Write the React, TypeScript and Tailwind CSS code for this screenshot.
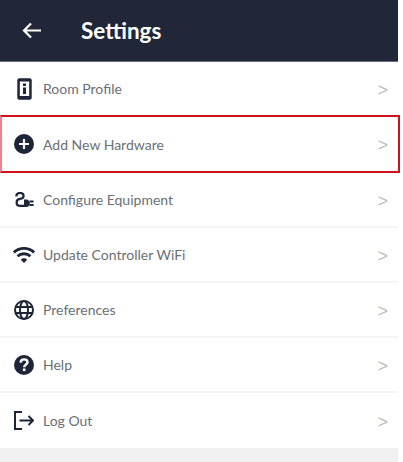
import React from "react";

const ink = "#1f2539";

const RoomIcon = () => (
  <svg className="shrink-0" width="15" height="22" viewBox="0 0 15 22">
    <rect x="0.3" y="0.3" width="14.4" height="21.4" rx="2" fill={ink} />
    <rect x="2.8" y="3.5" width="9.4" height="14.5" fill="#fff" />
    <rect x="6" y="5.5" width="3" height="2.5" fill={ink} />
    <rect x="6" y="9.5" width="3" height="6.5" fill={ink} />
  </svg>
);
const PlusIcon = () => (
  <svg className="shrink-0" width="20" height="20" viewBox="0 0 20 20">
    <circle cx="10" cy="10" r="10" fill={ink} />
    <path d="M10 5v10M5 10h10" stroke="#fff" strokeWidth="2.2" />
  </svg>
);
const PlugIcon = () => (
  <svg className="shrink-0" width="19" height="16" viewBox="0 0 19 16" fill="none">
    <path d="M1.2 4.4C1.5 2 3 1 5 1C7.2 1 8.6 2.2 8.6 3.9C8.6 5.6 7.2 6.5 5 6.9C2.8 7.3 1.6 8.3 1.6 10.4C1.6 12.6 3 13.9 5.5 13.9H9" stroke={ink} strokeWidth="2.2" />
    <path d="M9 7.5H11.5C13.5 7.5 14.8 9.3 14.8 11.2C14.8 13.1 13.5 15 11.5 15H9Z" fill={ink} />
    <path d="M14.5 9.5H18.6M14.5 13H18.6" stroke={ink} strokeWidth="2" />
  </svg>
);
const WifiIcon = () => (
  <svg className="shrink-0" width="22" height="16" viewBox="0 0 22 16" fill="none" stroke={ink} strokeWidth="2.8">
    <path d="M0.9 5.4C6.6 0 15.4 0 21.1 5.4" />
    <path d="M4.6 9.2C8.1 5.9 13.9 5.9 17.4 9.2" />
    <path d="M7.8 12.7L11 16L14.2 12.7C12.4 10.9 9.6 10.9 7.8 12.7Z" fill={ink} stroke="none" />
  </svg>
);
const GlobeIcon = () => (
  <svg className="shrink-0" width="20" height="20" viewBox="0 0 20 20" fill="none" stroke={ink} strokeWidth="2">
    <circle cx="10" cy="10" r="9" />
    <ellipse cx="10" cy="10" rx="4" ry="9" />
    <path d="M1.5 7H18.5M1.5 13H18.5" />
  </svg>
);
const HelpIcon = () => (
  <svg className="shrink-0" width="20" height="20" viewBox="0 0 20 20">
    <circle cx="10" cy="10" r="10" fill={ink} />
    <path d="M6.6 7.6C6.7 5.5 8.1 4.4 10.1 4.4C12.1 4.4 13.5 5.6 13.5 7.3C13.5 9.6 10.2 9.5 10.2 12.2" stroke="#fff" strokeWidth="2.4" fill="none" />
    <rect x="8.9" y="13.5" width="2.6" height="2.6" fill="#fff" />
  </svg>
);
const LogoutIcon = () => (
  <svg className="shrink-0" width="20" height="19" viewBox="0 0 20 19" fill="none" stroke={ink} strokeWidth="2">
    <path d="M8 1H1V18H8" />
    <path d="M5.5 9.5H19M14.5 5L19 9.5L14.5 14" />
  </svg>
);

const rows = [
  { label: "Room Profile", icon: <RoomIcon />, cls: "h-[53px] pl-[14px] pr-[10px]" },
  { label: "Add New Hardware", icon: <PlusIcon />, cls: "h-[58px] w-[400px] border-2 border-[#d0101c] border-l-[#e8868c] pl-[12px] pr-[10px]" },
  { label: "Configure Equipment", icon: <PlugIcon />, cls: "h-[55px] pl-[14px] pr-[10px] border-b-2 border-[#f5f5f5]" },
  { label: "Update Controller WiFi", icon: <WifiIcon />, cls: "h-[55px] pl-[14px] pr-[10px] border-b-2 border-[#f5f5f5]" },
  { label: "Preferences", icon: <GlobeIcon />, cls: "h-[55px] pl-[14px] pr-[10px] border-b-2 border-[#f5f5f5]" },
  { label: "Help", icon: <HelpIcon />, cls: "h-[55px] pl-[14px] pr-[10px] border-b-2 border-[#f5f5f5]" },
  { label: "Log Out", icon: <LogoutIcon />, cls: "h-[55px] pl-[14px] pr-[10px]" },
];

export default function App() {
  return (
    <div className="w-[403px] h-[462px] bg-white overflow-hidden font-['Lato',sans-serif]">
      <div className="w-[398px]">
        <header className="h-[62px] bg-[#212639] border-b border-[#6b6f7d] flex items-center pl-[22px]">
          <svg width="19" height="17" viewBox="0 0 19 17" fill="none" stroke="#fff" strokeWidth="2.2">
            <path d="M19 8.5H2M9 1.5L2 8.5L9 15.5" />
          </svg>
          <h1 className="ml-[40px] pt-[1px] text-[22.5px] leading-none font-bold text-white">Settings</h1>
        </header>
        {rows.map((r) => (
          <div key={r.label} className={`flex items-center ${r.cls}`}>
            <span className="w-[20px] mr-[9px] flex justify-center">{r.icon}</span>
            <span className="flex-1 text-[14px] font-normal text-[#6b6f75]">{r.label}</span>
            <span className="text-[18px] leading-none text-[#bcbcbc] font-['Liberation_Sans',sans-serif] pt-[2px]">&gt;</span>
          </div>
        ))}
        <div className="h-[14px] bg-[#f0f0f0]" />
      </div>
    </div>
  );
}
